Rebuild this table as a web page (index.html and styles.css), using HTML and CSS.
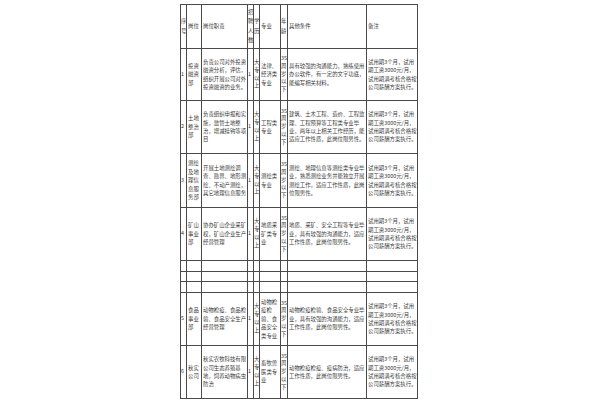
FILE: index.html
```html
<!DOCTYPE html>
<html lang="zh-CN">
<head>
<meta charset="utf-8">
<title>招聘岗位表</title>
<link rel="stylesheet" href="styles.css">
</head>
<body>
<table class="jobs">
  <colgroup>
    <col class="c-no"><col class="c-post"><col class="c-duty"><col class="c-num"><col class="c-edu"><col class="c-major"><col class="c-age"><col class="c-cond"><col class="c-note">
  </colgroup>
  <tr class="r-head">
    <td>序号</td><td>岗位</td><td>岗位职责</td><td>招聘人数</td><td>学历</td><td>专业</td><td>年龄</td><td>其他条件</td><td>备注</td>
  </tr>
  <tr class="r-1">
    <td>1</td><td>投资融资部</td><td>负责公司对外投资融资分析，评估，组织开展公司对外投资融资的业务。</td><td>1</td><td>大专以上</td><td>法律、经济类专业</td><td>35周岁以下</td><td>具有较强的沟通能力，熟练使用办公软件，有一定的文字功底，能编写相关材料。</td><td>试用期3个月，试用期工资3000元/月，试用期满考核合格按公司薪酬方案执行。</td>
  </tr>
  <tr class="r-2">
    <td>2</td><td>土地整治部</td><td>负责组织申报和实施，监管土地整治，增减挂钩等项目</td><td>1</td><td>大专以上</td><td>工程类专业</td><td>35周岁以下</td><td>建筑、土木工程、造价、工程监理、工程预算等工程类专业毕业，两年以上相关工作经历，能适应工作性质，此岗位限男性。</td><td>试用期3个月，试用期工资3000元/月，试用期满考核合格按公司薪酬方案执行。</td>
  </tr>
  <tr class="r-3">
    <td>3</td><td>测绘及地理信息服务部</td><td>开展土地测绘调查、勘界、地形测绘、不动产测绘，其它地理信息服务</td><td>1</td><td>大专以上</td><td>测绘类专业</td><td>35周岁以下</td><td>测绘、地理信息等测绘类专业毕业，熟悉测绘业务并能独立开展测绘工作，适应工作性质，此岗位限男性。</td><td>试用期3个月，试用期工资3000元/月，试用期满考核合格按公司薪酬方案执行。</td>
  </tr>
  <tr class="r-4">
    <td>4</td><td>矿山事业部</td><td>协办矿山企业采矿权，矿山企业生产经营管理</td><td>1</td><td>大专以上</td><td>地质采矿类专业</td><td>35周岁以下</td><td>地质、采矿、安全工程等专业毕业，具有较强的沟通能力，适应工作性质，此岗位限男性。</td><td>试用期3个月，试用期工资3000元/月，试用期满考核合格按公司薪酬方案执行。</td>
  </tr>
  <tr class="r-e1"><td></td><td></td><td></td><td></td><td></td><td></td><td></td><td></td><td></td></tr>
  <tr class="r-e2"><td></td><td></td><td></td><td></td><td></td><td></td><td></td><td></td><td></td></tr>
  <tr class="r-e3"><td></td><td></td><td></td><td></td><td></td><td></td><td></td><td></td><td></td></tr>
  <tr class="r-5">
    <td>5</td><td>食品事业部</td><td>动物检疫、食品检验、食品安全生产经营管理</td><td>1</td><td>大专以上</td><td>动物检疫检验、食品安全类专业</td><td>35周岁以下</td><td>动物检疫检验、食品安全专业毕业，具有较强的沟通能力，适应工作性质，此岗位限男性。</td><td>试用期3个月，试用期工资3000元/月，试用期满考核合格按公司薪酬方案执行。</td>
  </tr>
  <tr class="r-6">
    <td>6</td><td>秋实公司</td><td>秋实农牧科技有限公司生态养殖基地，饲养动物病虫防治</td><td>1</td><td>大专以上</td><td>畜牧兽医类专业</td><td>35周岁以下</td><td>动物检疫检疫、疫病防治，适应工作性质，此岗位限男性。</td><td>试用期3个月，试用期工资3000元/月，试用期满考核合格按公司薪酬方案执行。</td>
  </tr>
</table>
</body>
</html>
```
FILE: styles.css
```css
html, body {
  margin: 0;
  padding: 0;
  background: #ffffff;
}
body {
  font-family: "Noto Sans CJK SC", "Liberation Sans", sans-serif;
  color: #3a3a3a;
}
.jobs {
  margin: 4px 0 0 180px;
  border-collapse: collapse;
  table-layout: fixed;
  width: 238px;
}
.jobs td {
  border: 1px solid #4a4a4a;
  padding: 0 0 0 1px;
  font-size: 5.4px;
  line-height: 8.4px;
  vertical-align: middle;
  text-align: left;
  word-break: break-all;
}
.jobs td:nth-child(1),
.jobs td:nth-child(4),
.jobs td:nth-child(5),
.jobs td:nth-child(7) {
  padding: 0;
  line-height: 7.8px;
}
.jobs .r-head td {
  line-height: 9.4px;
}
.c-no { width: 6px; }
.c-post { width: 15px; }
.c-duty { width: 46px; }
.c-num { width: 6px; }
.c-edu { width: 6px; }
.c-major { width: 21px; }
.c-age { width: 7px; }
.c-cond { width: 79px; }
.c-note { width: 51px; }
.r-head { height: 44px; }
.r-1 { height: 52px; }
.r-2 { height: 53px; }
.r-3 { height: 54px; }
.r-4 { height: 53px; }
.r-e1 { height: 11px; }
.r-e2 { height: 10px; }
.r-e3 { height: 11px; }
.r-5 { height: 53px; }
.r-6 { height: 53px; }
```
